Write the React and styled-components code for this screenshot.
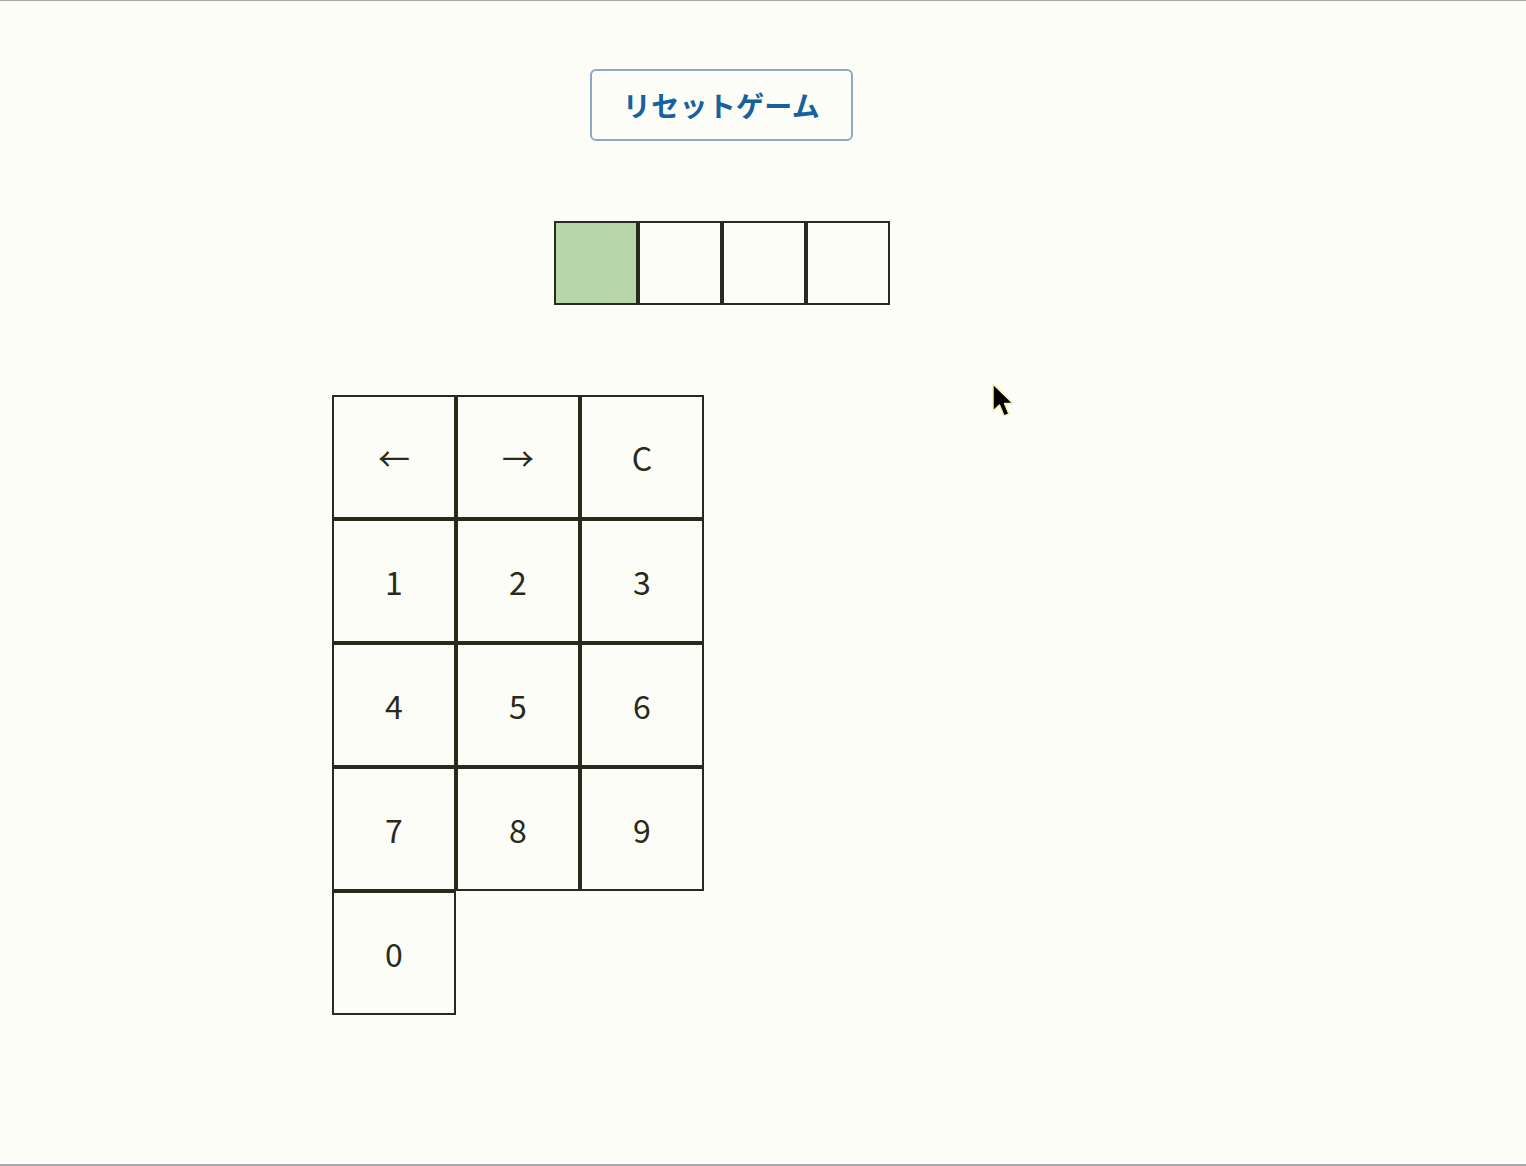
import React, { useState } from "react";
import styled, { createGlobalStyle } from "styled-components";

const GlobalStyle = createGlobalStyle`
  html, body {
    margin: 0;
    padding: 0;
    background: #fdfdf8;
  }
  body {
    font-family: "Noto Sans CJK JP", "Noto Sans", sans-serif;
  }
`;

const KEYS = ["←", "→", "C", "1", "2", "3", "4", "5", "6", "7", "8", "9", "0"];

const App = () => {
  const [digits, setDigits] = useState(["", "", "", ""]);
  const [cursor, setCursor] = useState(0);

  const press = key => {
    if (key === "←") return setCursor(Math.max(0, cursor - 1));
    if (key === "→") return setCursor(Math.min(3, cursor + 1));
    if (key === "C") {
      setDigits(["", "", "", ""]);
      return setCursor(0);
    }
    const next = [...digits];
    next[cursor] = key;
    setDigits(next);
    setCursor(Math.min(3, cursor + 1));
  };

  const reset = () => {
    setDigits(["", "", "", ""]);
    setCursor(0);
  };

  return (
    <Page>
      <GlobalStyle />
      <Board>
        <ResetButton onClick={reset}>リセットゲーム</ResetButton>
        <Slots>
          {digits.map((d, i) => (
            <Slot key={i} active={i === cursor}>
              {d}
            </Slot>
          ))}
        </Slots>
        <Keypad>
          {KEYS.map(k => (
            <Key key={k} onClick={() => press(k)}>
              {k}
            </Key>
          ))}
        </Keypad>
      </Board>
      <Pointer width="26" height="40" viewBox="0 0 26 40">
        <path
          d="M3 3 L3 30 L9.5 24 L14 35 L19 33 L14.5 22.5 L23 22.5 Z"
          fill="#000"
          stroke="#f4f0b0"
          strokeWidth="1.5"
          strokeLinejoin="round"
        />
      </Pointer>
    </Page>
  );
};

const Page = styled.div`
  position: relative;
  box-sizing: border-box;
  min-height: 1166px;
  border-top: 1px solid #a9a9a9;
  border-bottom: 2px solid #a9a9a9;
`;

const Board = styled.div`
  width: 1443px;
  display: flex;
  flex-direction: column;
  align-items: center;
`;

const ResetButton = styled.button`
  margin-top: 68px;
  box-sizing: border-box;
  width: 263px;
  height: 72px;
  padding: 0;
  background: #fdfdf8;
  border: 2px solid #8ca8c2;
  border-radius: 6px;
  color: #17619e;
  font-family: "Noto Sans CJK JP", "Noto Sans", sans-serif;
  font-size: 28px;
  font-weight: 700;
  letter-spacing: 0.3px;
  cursor: pointer;
`;

const Slots = styled.div`
  margin-top: 80px;
  display: flex;
`;

const Slot = styled.div`
  box-sizing: border-box;
  width: 84px;
  height: 84px;
  border: 2px solid #2a2a22;
  background: ${props => (props.active ? "#b7d6a9" : "transparent")};
  display: flex;
  align-items: center;
  justify-content: center;
  font-size: 30px;
  color: #2a2a1c;
`;

const Keypad = styled.div`
  margin-top: 90px;
  align-self: flex-start;
  margin-left: 332px;
  display: grid;
  grid-template-columns: repeat(3, 124px);
  grid-auto-rows: 124px;
`;

const Key = styled.button`
  box-sizing: border-box;
  padding: 0;
  margin: 0;
  background: transparent;
  border: 2px solid #2a2a1c;
  color: #2a2a1c;
  font-family: "Noto Sans CJK JP", "Noto Sans", sans-serif;
  font-size: 32px;
  font-weight: 400;
  cursor: pointer;
`;

const Pointer = styled.svg`
  position: absolute;
  left: 990px;
  top: 380px;
  pointer-events: none;
`;

export default App;
